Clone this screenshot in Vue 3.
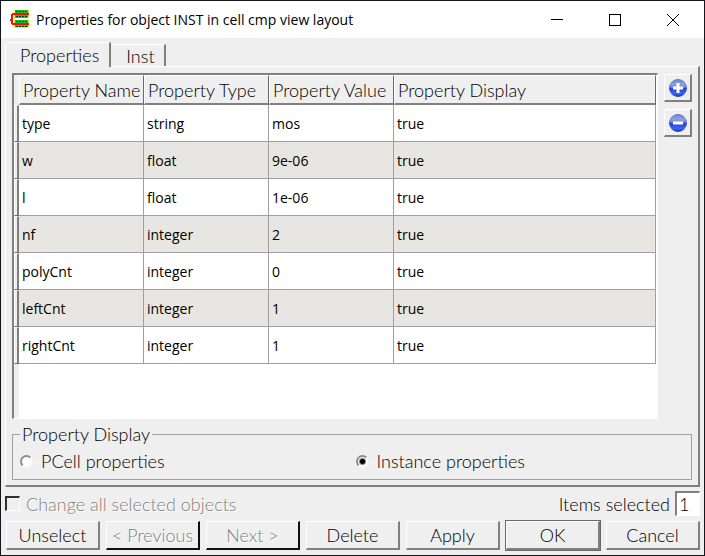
<script setup>
import { ref } from 'vue'

const tab = ref('props')
const display = ref('instance')
const selected = ref('1')
const columns = ['Property Name', 'Property Type', 'Property Value', 'Property Display']
const rows = [
  ['type', 'string', 'mos', 'true'],
  ['w', 'float', '9e-06', 'true'],
  ['l', 'float', '1e-06', 'true'],
  ['nf', 'integer', '2', 'true'],
  ['polyCnt', 'integer', '0', 'true'],
  ['leftCnt', 'integer', '1', 'true'],
  ['rightCnt', 'integer', '1', 'true'],
]
const actions = [
  { label: 'Unselect' },
  { label: '< Previous', disabled: true },
  { label: 'Next >', disabled: true },
  { label: 'Delete' },
  { label: 'Apply' },
  { label: 'OK', primary: true },
  { label: 'Cancel' },
]
</script>

<template>
  <div class="window">
    <header class="titlebar">
      <svg class="logo" width="20" height="19" viewBox="0 0 20 19" shape-rendering="crispEdges">
        <path fill="#d8f040" d="M4 0h15v8H4zM4 10h15v8H4z" />
        <path fill="#18c030" d="M5 0h13v8H5zM5 10h13v7H5z" />
        <path fill="none" stroke="#064818" stroke-width="1" stroke-dasharray="2 1" d="M6 1.5h11M6 6.5h11M6 11.5h11M6 16.5h11" />
        <path fill="#f81010" d="M2 3h17v2H3v8h16v2H2v-1H1v-3H0V9h1V4h1z" />
      </svg>
      <h1>Properties for object INST in cell cmp view layout</h1>
      <div class="window-controls">
        <button aria-label="Minimize"><svg width="14" height="14" viewBox="0 0 14 14" shape-rendering="crispEdges"><path d="M1 6.5h12" /></svg></button>
        <button aria-label="Maximize"><svg width="14" height="14" viewBox="0 0 14 14" shape-rendering="crispEdges"><path d="M1.5 1.5h11v11h-11z" /></svg></button>
        <button aria-label="Close"><svg width="14" height="14" viewBox="0 0 14 14"><path d="M1 1l12 12M13 1L1 13" /></svg></button>
      </div>
    </header>

    <nav class="tabs" role="tablist">
      <button class="tab" :class="{ active: tab === 'props' }" role="tab" @click="tab = 'props'">Properties</button>
      <button class="tab" :class="{ active: tab === 'inst' }" role="tab" @click="tab = 'inst'">Inst</button>
    </nav>

    <main class="pane">
      <div class="editor">
        <div class="view">
          <table>
            <colgroup><col class="c-strip"><col class="c-prop"><col class="c-prop"><col class="c-prop"><col></colgroup>
            <thead>
              <tr><td class="corner"></td><th v-for="c in columns" :key="c">{{ c }}</th></tr>
            </thead>
            <tbody>
              <tr v-for="r in rows" :key="r[0]">
                <td class="handle"></td>
                <td v-for="(v, i) in r" :key="i">{{ v }}</td>
              </tr>
            </tbody>
          </table>
        </div>
        <div class="side">
          <button class="tool" aria-label="Add property">
            <svg width="20" height="20" viewBox="0 0 20 20">
              <defs>
                <linearGradient id="ball" x1="0" y1="0" x2="0" y2="1">
                  <stop offset="0" stop-color="#5468b8" /><stop offset=".3" stop-color="#7088d8" /><stop offset=".48" stop-color="#5068d0" />
                  <stop offset=".52" stop-color="#2444d8" /><stop offset=".82" stop-color="#3c64f8" /><stop offset="1" stop-color="#1c2888" />
                </linearGradient>
              </defs>
              <circle cx="10" cy="10" r="9" fill="url(#ball)" />
              <path fill="#fff" opacity=".2" d="M2 9a8 7 0 0 1 16 0q-8 3-16 0z" />
              <path stroke="#fff" stroke-width="3" d="M10 5v10M5 10h10" />
            </svg>
          </button>
          <button class="tool" aria-label="Remove property">
            <svg width="20" height="20" viewBox="0 0 20 20">
              <circle cx="10" cy="10" r="9" fill="url(#ball)" />
              <path fill="#fff" opacity=".2" d="M2 9a8 7 0 0 1 16 0q-8 3-16 0z" />
              <path stroke="#fff" stroke-width="3" d="M5 10h10" />
            </svg>
          </button>
        </div>
      </div>
      <fieldset>
        <legend>Property Display</legend>
        <div class="radios">
          <label><input v-model="display" type="radio" name="display" value="pcell">PCell properties</label>
          <label><input v-model="display" type="radio" name="display" value="instance">Instance properties</label>
        </div>
      </fieldset>
    </main>

    <div class="status">
      <label class="check"><input type="checkbox" disabled>Change all selected objects</label>
      <label class="count">Items selected<input v-model="selected" type="text" readonly></label>
    </div>

    <footer class="actions">
      <button v-for="a in actions" :key="a.label" :disabled="a.disabled" :class="{ primary: a.primary }">{{ a.label }}</button>
    </footer>
  </div>
</template>

<style>
body {
  background: #18202c;
}
</style>

<style scoped>
* {
  box-sizing: border-box;
}
.window {
  min-height: 100vh;
  display: flex;
  flex-direction: column;
  border: 1px solid #15161c;
  background: #efefef;
  color: #000;
  font: 300 18px/20px Lato, "Liberation Sans", sans-serif;
}
button,
input {
  font: inherit;
  color: inherit;
  margin: 0;
}
.titlebar {
  display: flex;
  align-items: center;
  height: 37px;
  padding-left: 9px;
  background: #fff;
}
h1 {
  flex: 1;
  margin: 0 0 0 6px;
  font: 400 14px/20px "Open Sans", "Noto Sans", sans-serif;
  white-space: nowrap;
}
.window-controls {
  display: flex;
}
.window-controls button {
  width: 58px;
  height: 36px;
  padding: 0;
  border: 0;
  background: none;
}
.window-controls button:last-child {
  margin-right: 2px;
}
.window-controls svg {
  display: block;
  margin: auto;
  fill: none;
  stroke: #000;
}
.tabs {
  display: flex;
  align-items: flex-end;
  height: 28px;
  padding-left: 4px;
}
.tab {
  height: 22px;
  padding: 0 9px 0 15px;
  border: solid;
  border-width: 1px 2px 0 0;
  border-color: #fff #808080 #fff #fff;
  background: #efefef;
}
.tab.active {
  position: relative;
  height: 25px;
  margin-bottom: -1px;
  padding: 0 10px 0 14px;
  border-left-width: 1px;
  border-top-left-radius: 3px;
}
.pane {
  flex: 1;
  display: flex;
  flex-direction: column;
  gap: 5px;
  margin: 0 4px;
  padding: 6px 6px 5px;
  border: solid;
  border-width: 1px 2px 2px 1px;
  border-color: #fff #808080 #808080 #fff;
}
.editor {
  flex: 1;
  display: flex;
  gap: 6px;
}
.view {
  flex: 1;
  border: solid;
  border-width: 2px 1px 1px 2px;
  border-color: #808080 #fff #fff #808080;
  padding-right: 1px;
  background: linear-gradient(90deg, #efefef 5px, #fff 5px);
}
table {
  width: 100%;
  table-layout: fixed;
  border-collapse: separate;
  border-spacing: 0;
}
.c-strip {
  width: 5px;
}
.c-prop {
  width: 125px;
}
th {
  height: 30px;
  padding: 0 0 0 3px;
  border: solid;
  border-width: 1px 1px 2px 1px;
  border-color: #fff #696969 #808080 #fff;
  background: #efefef;
  font-weight: 300;
  text-align: left;
  white-space: nowrap;
}
td {
  height: 37px;
  padding: 2px 3px 0;
  border: solid #a0a0a0;
  border-width: 0 1px 1px 0;
  background: #fff;
  font: 400 14px/20px "Open Sans", "Noto Sans", sans-serif;
}
tbody tr:nth-child(even) td {
  background: #e8e6e2;
}
.corner {
  height: 30px;
  padding: 0;
  border: 0;
  background: #efefef;
}
tbody tr .handle,
tbody tr:nth-child(even) .handle {
  padding: 0;
  border: solid;
  border-width: 1px 2px 1px 1px;
  border-color: #fff #808080 #696969 #fff;
  background: #efefef;
}
.side {
  display: flex;
  flex-direction: column;
  gap: 7px;
  padding-top: 1px;
}
.tool,
.actions button {
  border: solid;
  border-width: 1px 2px 2px 1px;
  border-color: #fff #808080 #808080 #fff;
  background: #efefef;
}
.tool {
  width: 28px;
  height: 28px;
  padding: 0;
}
.tool svg {
  display: block;
  margin: auto;
}
fieldset {
  margin: 0;
  padding: 4px 7px 5px;
  border: 1px solid #a0a0a0;
}
legend {
  padding: 0 2px;
}
.radios {
  display: grid;
  grid-template-columns: 1fr 1fr;
  column-gap: 7px;
  height: 26px;
  align-items: center;
}
.radios label,
.check,
.count {
  display: flex;
  align-items: center;
}
.radios label {
  gap: 8px;
}
.radios input {
  appearance: none;
  width: 13px;
  height: 13px;
  border: 2px solid;
  border-color: #8c8c8c #f8f8f8 #f8f8f8 #8c8c8c;
  border-radius: 50%;
  background: #fff;
}
.radios input:checked {
  background: radial-gradient(circle, #000 2px, #fff 4px);
}
.status {
  display: flex;
  justify-content: space-between;
  align-items: center;
  padding: 4px 4px 0;
}
.check {
  gap: 6px;
  color: #808080;
  text-shadow: 1px 1px #fff;
}
.check input {
  appearance: none;
  width: 15px;
  height: 15px;
  border: solid;
  border-width: 2px 1px 1px 2px;
  border-color: #303030 #fff #fff #303030;
}
.count {
  gap: 5px;
}
.count input {
  width: 25px;
  height: 25px;
  padding: 0 2px;
  border: solid;
  border-width: 2px 1px 1px 2px;
  border-color: #808080 #fff #fff #808080;
  background: #fff;
}
.actions {
  display: grid;
  grid-template-columns: repeat(7, 1fr);
  gap: 6px;
  padding: 5px 4px 5px 5px;
}
.actions button {
  height: 29px;
  padding: 0;
  white-space: nowrap;
}
.actions button:disabled {
  border-color: #fff #101010 #101010 #fff;
  color: #808080;
  text-shadow: 1px 1px #fff;
}
.actions .primary {
  outline: 1px solid #696969;
}
</style>
